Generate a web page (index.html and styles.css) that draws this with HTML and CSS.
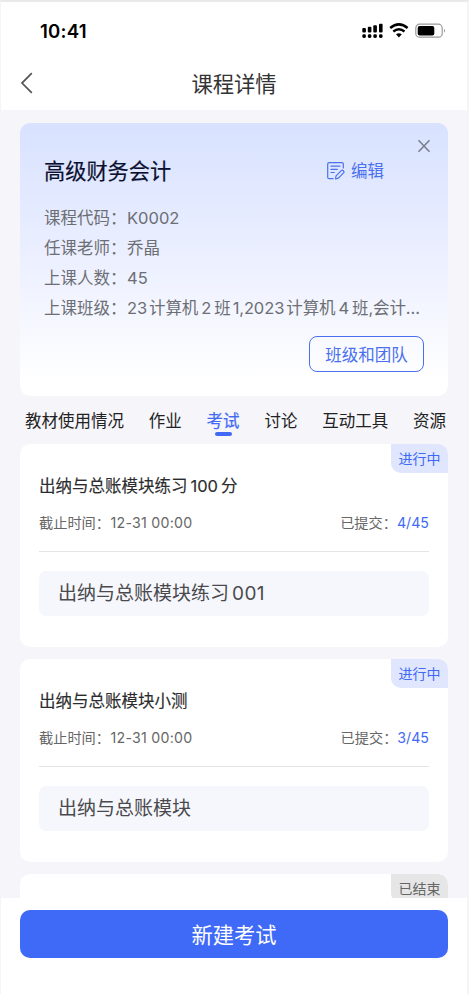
FILE: index.html
```html
<!DOCTYPE html>
<html lang="zh-CN">
<head>
<meta charset="utf-8">
<title>课程详情</title>
<link rel="stylesheet" href="styles.css">
</head>
<body>
<div class="phone">
  <header class="top">
    <div class="status">
      <span class="clock">10:41</span>
      <svg class="status-icons" width="86" height="20" viewBox="0 0 86 20">
        <g fill="#000">
          <rect x="0.3" y="7" width="3.6" height="4.6" rx="1"/>
          <rect x="5.8" y="5.8" width="3.6" height="5.8" rx="1"/>
          <rect x="11.3" y="4.3" width="3.6" height="7.3" rx="1"/>
          <rect x="17" y="2.8" width="3.6" height="8.8" rx="1"/>
          <rect x="0.3" y="13.3" width="3.6" height="3.6" rx="1.4"/>
          <rect x="5.8" y="13.3" width="3.6" height="3.6" rx="1.4"/>
          <rect x="11.3" y="13.3" width="3.6" height="3.6" rx="1.4"/>
          <rect x="17" y="13.3" width="3.6" height="3.6" rx="1.4"/>
          <path d="M34 13.2Q36.9 11.2 39.8 13.2L36.9 16.4Z"/>
        </g>
        <path d="M28.2 7Q36.9-.2 45.6 7M31.3 10.4Q36.9 6 42.5 10.4" fill="none" stroke="#000" stroke-width="2.5"/>
        <rect x="53.8" y="3.2" width="26.4" height="13" rx="3.8" fill="none" stroke="#999" stroke-width="1.2"/>
        <rect x="55.7" y="5" width="16.6" height="9.6" rx="2" fill="#000"/>
        <path d="M82 7.7Q84.2 9.8 82 11.8Z" fill="#999"/>
      </svg>
    </div>
    <div class="nav">
      <svg class="back" width="14" height="24" viewBox="0 0 14 24"><path d="M11.8 2.2 2 12.1 11.8 21.8" fill="none" stroke="#555" stroke-width="1.7"/></svg>
      <h1>课程详情</h1>
    </div>
  </header>

  <main class="content">
    <section class="course">
      <svg class="close" width="14" height="14" viewBox="0 0 14 14"><path d="M1.5 1.2 12.5 12.8M12.5 1.2 1.5 12.8" stroke="#737989" stroke-width="1.4"/></svg>
      <div class="course-head">
        <h2>高级财务会计</h2>
        <a class="edit">
          <svg width="18" height="18" viewBox="0 0 18 18" fill="none" stroke="#4a70ee" stroke-width="1.2" stroke-linecap="round" stroke-linejoin="round"><path d="M6.2 16.7H2.2Q.7 16.7.7 15.2V2Q.7.6 2.2.6H14.8Q16.3.6 16.3 2V6M4 4.2H12.9M4 7.4H10.3M4 10.5H7.3M8.6 17 9 13.9 14.3 8.6Q15.3 7.8 16.4 8.8 17.5 9.9 16.6 10.9L11.4 16.1Z"/></svg>
          <span>编辑</span>
        </a>
      </div>
      <ul class="info">
        <li>课程代码：<span class="value">K0002</span></li>
        <li>任课老师：<span class="value">乔晶</span></li>
        <li>上课人数：<span class="value">45</span></li>
        <li>上课班级：<span class="value classes"><span class="end">23</span>计算机<span class="num">2</span>班<span class="start">1,</span><span class="end">2023</span>计算机<span class="num">4</span>班,会计...</span></li>
      </ul>
      <div class="team-row"><button class="team">班级和团队</button></div>
    </section>

    <nav class="tabs">
      <span>教材使用情况</span><span>作业</span><span class="active">考试</span><span>讨论</span><span>互动工具</span><span>资源</span>
    </nav>

    <section class="exams">
      <article class="exam">
        <span class="tag">进行中</span>
        <h3>出纳与总账模块练习<span class="num">100</span>分</h3>
        <div class="meta"><span>截止时间：<span class="date">12-31 00:00</span></span><span>已提交：<b>4/45</b></span></div>
        <div class="paper">出纳与总账模块练习<span class="serial">001</span></div>
      </article>
      <article class="exam">
        <span class="tag">进行中</span>
        <h3>出纳与总账模块小测</h3>
        <div class="meta"><span>截止时间：<span class="date">12-31 00:00</span></span><span>已提交：<b>3/45</b></span></div>
        <div class="paper">出纳与总账模块</div>
      </article>
      <article class="exam">
        <span class="tag ended">已结束</span>
      </article>
    </section>
  </main>

  <footer class="bottom"><button class="create">新建考试</button></footer>
</div>
</body>
</html>
```

FILE: styles.css
```css
* { box-sizing: border-box; }
body {
  margin: 0;
  background: #f5f5fa;
  font-family: Inter, "Noto Sans CJK SC", sans-serif;
  text-autospace: no-autospace;
}
h1, h2, h3, ul { margin: 0; padding: 0; }
button { font: inherit; padding: 0; }

.phone {
  height: 994px;
  display: flex;
  flex-direction: column;
  overflow: hidden;
  border-top: 2px solid #e9e9e9;
  border-left: 1px solid #f5f5f8;
  border-right: 2px solid #f5f5f8;
}

.top { height: 108px; flex: none; background: #fff; }
.status {
  display: flex;
  justify-content: space-between;
  height: 54px;
  padding: 19px 19px 0 39px;
}
.clock { font-size: 18.6px; line-height: 20px; font-weight: 600; letter-spacing: 0.2px; color: #000; }
.nav {
  display: grid;
  grid-template-columns: 40px 1fr 40px;
  align-items: center;
  height: 54px;
}
.back { margin-left: 19px; }
.nav h1 {
  padding-top: 2px;
  text-align: center;
  font-size: 21.3px;
  line-height: 30px;
  font-weight: 400;
  color: #333;
}

.content { flex: 1; min-height: 0; overflow: hidden; padding: 13px 19px 0; }

.course {
  position: relative;
  height: 273px;
  padding: 31px 24px 0;
  border-radius: 10px;
  background: linear-gradient(#d8e2ff, #ebefff 48%, #fff 95%);
}
.close { position: absolute; top: 16px; right: 17px; }
.course-head { display: flex; justify-content: space-between; align-items: center; height: 34px; padding-right: 40px; }
.course-head h2 { font-size: 21.2px; line-height: 34px; font-weight: 400; color: #0b1030; -webkit-text-stroke: 0.2px #0b1030; }
.edit { display: flex; align-items: center; gap: 6px; font-size: 16.5px; line-height: 24px; color: #4a70ee; }
.info { list-style: none; margin-top: 15px; }
.info li { font-size: 16.5px; line-height: 30px; color: #6c6e74; white-space: nowrap; }
.value { margin-left: 0.5px; }
.classes { letter-spacing: -0.1px; }
.num { margin: 0 3px; }
.start { margin-left: 2px; }
.end { margin-right: 2px; }
.team-row { display: flex; justify-content: flex-end; margin-top: 13px; }
.team {
  width: 115px;
  height: 36px;
  border: 1.4px solid #4a70ee;
  border-radius: 8px;
  background: transparent;
  color: #4a70ee;
  font-size: 16.5px;
}

.tabs {
  display: flex;
  justify-content: space-between;
  height: 48px;
  padding: 13px 2px 0 5px;
  font-size: 16.5px;
  line-height: 24px;
  color: #222;
}
.tabs .active { position: relative; color: #416af4; -webkit-text-stroke: 0.2px #416af4; }
.active::after {
  content: "";
  position: absolute;
  left: 8px;
  bottom: 8px;
  width: 17px;
  height: 4px;
  border-radius: 2px;
  background: #416af4;
}

.exams { display: grid; gap: 12px; }
.exam {
  position: relative;
  height: 203px;
  padding: 30px 19px 0;
  border-radius: 10px;
  background: #fff;
}
.tag {
  position: absolute;
  top: 0;
  right: 0;
  width: 57px;
  height: 29px;
  border-radius: 0 10px 0 10px;
  background: #dfe6fe;
  color: #416af4;
  font-size: 14px;
  line-height: 29px;
  text-align: center;
}
.tag.ended { background: #e6e6e6; color: #666; }
.exam h3 { font-size: 16.5px; line-height: 24px; font-weight: 400; color: #2c2c2e; -webkit-text-stroke: 0.15px #2c2c2e; }
.meta {
  display: flex;
  justify-content: space-between;
  height: 54px;
  padding-top: 15px;
  border-bottom: 1px solid #e4e4e8;
  font-size: 14.2px;
  line-height: 20px;
  color: #666;
}
.date { margin-left: 0.5px; letter-spacing: 0.25px; }
.meta b { font-weight: 400; color: #416af4; }
.paper {
  height: 45px;
  margin-top: 19px;
  padding-left: 19px;
  border-radius: 7px;
  background: #f6f7fc;
  font-size: 19px;
  line-height: 46px;
  color: #4a4a4e;
}
.serial { margin-left: 3px; letter-spacing: 0.4px; }

.bottom { height: 96px; flex: none; padding: 12px 19px 0; background: #fff; }
.create {
  width: 100%;
  height: 48px;
  padding-bottom: 2px;
  border: 0;
  border-radius: 10px;
  background: #3f6af8;
  color: #fff;
  font-size: 21.3px;
}
```
